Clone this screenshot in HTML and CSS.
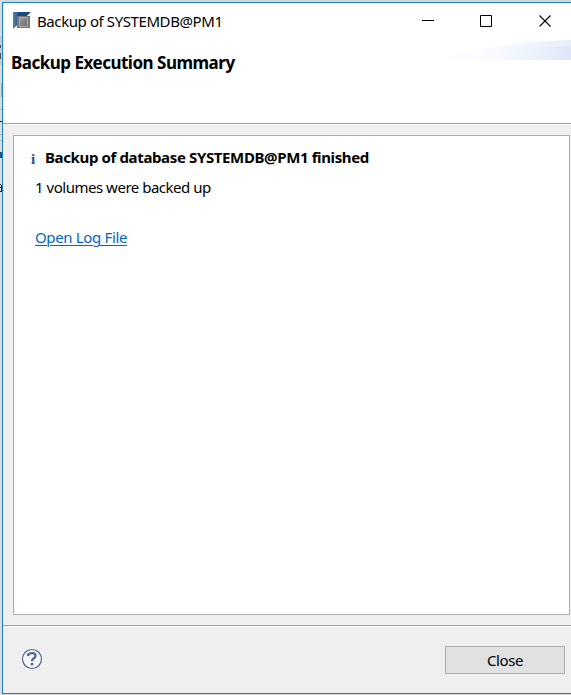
FILE: index.html
```html
<!DOCTYPE html>
<html lang="en">
<head>
<meta charset="utf-8">
<title>Backup of SYSTEMDB@PM1</title>
<link rel="stylesheet" href="styles.css">
</head>
<body>
<svg class="backdrop" viewBox="0 0 3 695" aria-hidden="true" shape-rendering="crispEdges">
  <path fill="#d9dbdf" d="M0 0h3v695H0z"/>
  <path fill="#c5ccd8" d="M0 36h2v29H0z"/>
  <path fill="#555" d="M0 45h1v3H0zM0 53h1v6H0z"/>
  <path fill="#bca59b" d="M1 83h1v14H1z"/>
  <path fill="#aeb5bf" d="M0 109h2v1H0zM0 134h2v1H0zM0 140h2v1H0z"/>
  <path fill="#222" d="M0 121h2v1H0zM0 184h1v1H0zM1 185h1v7H1zM0 187h1v1H0zM0 191h1v1H0z"/>
  <path fill="#174f87" d="M0 152h2v6H0z"/>
</svg>
<div class="window">
  <header class="header">
    <div class="titlebar">
      <svg class="app-icon" width="18" height="18" viewBox="0 0 18 18">
        <defs>
          <linearGradient id="blue" x2="1"><stop stop-color="#5b84ad"/><stop offset=".35" stop-color="#164981"/><stop offset="1" stop-color="#1b4879"/></linearGradient>
          <linearGradient id="steel" x2="1" y2="1"><stop stop-color="#999"/><stop offset="1" stop-color="#707070"/></linearGradient>
        </defs>
        <path fill="url(#blue)" d="M0 0h18L0 17z"/>
        <path fill="#777" d="M4 4h13v12H4z"/>
        <path fill="url(#steel)" stroke="#aaa" d="M6.500 5.500h8v9h-8z"/>
      </svg>
      <span class="title">Backup of SYSTEMDB@PM1</span>
      <svg class="controls" width="132" height="14" viewBox="0 0 132 14" fill="none" stroke="#000">
        <path d="M0 6.5h12M58.500 1.500h11v11h-11z"/>
        <path stroke-width="1.100" d="M117.500 1.500l11 11m0-11l-11 11"/>
      </svg>
    </div>
    <h1 class="heading">Backup Execution Summary</h1>
    <svg class="swoosh" width="136" height="22" viewBox="0 0 136 22">
      <defs>
        <linearGradient id="haze" x2="1"><stop stop-color="#fff"/><stop offset=".45" stop-color="#f8faff"/><stop offset="1" stop-color="#e9eefb"/></linearGradient>
        <linearGradient id="deep" x2="1"><stop stop-color="#f8faff" stop-opacity="0"/><stop offset="1" stop-color="#dfe6f8"/></linearGradient>
      </defs>
      <path fill="url(#haze)" d="M0 20Q55 3 136 0v20z"/>
      <path fill="url(#deep)" d="M48 20Q86 8 136 6v14z"/>
    </svg>
  </header>
  <main class="content">
    <section class="panel">
      <div class="status"><span class="info">i</span><strong class="result">Backup of database SYSTEMDB@PM1 finished</strong></div>
      <p class="detail">1 volumes were backed up</p>
      <a class="log" href="#">Open Log File</a>
    </section>
  </main>
  <footer class="footer">
    <svg class="help" width="22" height="22" viewBox="0 0 22 22" fill="none" stroke="#52658c">
      <circle cx="11" cy="11" r="9.500" fill="#f5f6f8" stroke-width="1.200"/>
      <path stroke-width="2.300" d="M7.200 8V6.600Q8.500 5.100 11.100 5.100Q14.500 5.100 14.500 7.700Q14.500 9.300 12.600 10.400Q11 11.300 11 13.200"/>
      <path fill="#52658c" stroke="none" d="M9.700 15h2.600v2.300H9.700z"/>
    </svg>
    <button class="close">Close</button>
  </footer>
</div>
</body>
</html>
```
FILE: styles.css
```css
* { box-sizing: border-box; }
body {
  margin: 0;
  width: 571px;
  height: 695px;
  padding: 2px 0 1px 2px;
  overflow: hidden;
  background: #d4d7dc;
  color: #000;
  font: 15px/20px "Noto Sans", "Open Sans", sans-serif;
}
.backdrop { position: absolute; left: 0; top: 0; width: 3px; height: 695px; }
.window {
  position: relative;
  height: 692px;
  display: flex;
  flex-direction: column;
  border: 1px solid #1a80d0;
  border-right: 0;
  background: #efefef;
}
.header {
  position: relative;
  height: 121px;
  background: #fff;
  border-bottom: 1px solid #a0a0a0;
}
.titlebar { display: flex; height: 37px; align-items: flex-start; padding-left: 10px; }
.app-icon { margin-top: 9px; }
.title { width: 185px; margin: 8px 0 0 6px; letter-spacing: -.41px; white-space: nowrap; }
.controls { margin: 11px 0 0 200px; }
.heading { margin: 13px 0 0 8px; font-size: 17px; line-height: 20px; letter-spacing: -.5px; }
.swoosh { position: absolute; right: 0; top: 37px; }
.content { height: 501px; padding: 10px 1px 11px 10px; border-top: 1px solid #fff; }
.panel { height: 480px; background: #fff; border: 1px solid #acacb1; padding: 11px 0 0 21px; }
.status { display: flex; height: 20px; }
.info { width: 10px; margin-left: -5px; padding-left: 1px; color: #155996; font: bold 15px/24px "Liberation Serif", serif; }
.result { margin-left: 5px; letter-spacing: -.37px; white-space: nowrap; }
.detail { margin: 10px 0 30px; letter-spacing: -.48px; }
.log { color: #0066cc; letter-spacing: -.35px; text-underline-offset: 2px; text-decoration-thickness: 1px; }
.footer {
  flex: 1;
  display: flex;
  justify-content: space-between;
  align-items: flex-start;
  border-top: 1px solid #a0a0a0;
  box-shadow: inset 0 1px #fff;
  padding: 20px 6px 0 18px;
}
.help { margin-top: 2px; }
.close {
  width: 120px;
  height: 28px;
  padding: 0;
  border: 1px solid #adadad;
  background: #e1e1e1;
  color: #000;
  font: 15px/20px "Noto Sans", sans-serif;
  letter-spacing: -.45px;
}
```
